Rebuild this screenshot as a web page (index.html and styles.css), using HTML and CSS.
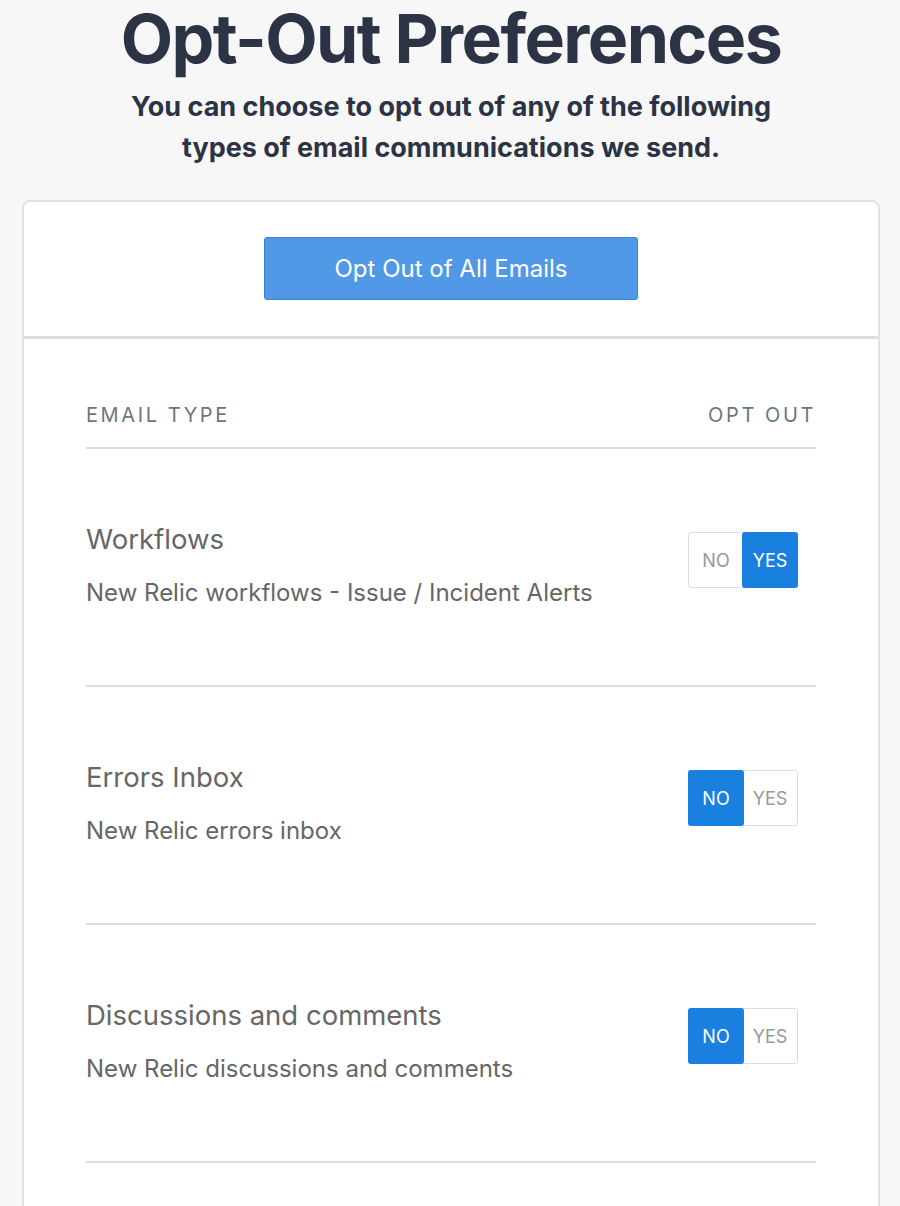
FILE: index.html
```html
<!DOCTYPE html>
<html lang="en">
<head>
    <meta charset="UTF-8">
    <meta name="viewport" content="width=device-width, initial-scale=1.0">
    <title>Opt-Out Preferences</title>
    <link rel="stylesheet" href="styles.css">
</head>
<body>

    <h1 class="page-title">Opt-Out Preferences</h1>
    <p class="page-intro">You can choose to opt out of any of the following<br>types of email communications we send.</p>

    <div class="card">
        <div class="card-top">
            <button class="opt-all-btn">Opt Out of All Emails</button>
        </div>

        <div class="card-body">
            <div class="table-head">
                <span>Email Type</span>
                <span>Opt Out</span>
            </div>

            <!-- Workflows -->
            <div class="row">
                <div class="row-text">
                    <div class="row-title">Workflows</div>
                    <div class="row-desc">New Relic workflows - Issue / Incident Alerts</div>
                </div>
                <div class="toggle">
                    <span class="toggle-opt">NO</span>
                    <span class="toggle-opt active">YES</span>
                </div>
            </div>

            <!-- Errors Inbox -->
            <div class="row">
                <div class="row-text">
                    <div class="row-title">Errors Inbox</div>
                    <div class="row-desc">New Relic errors inbox</div>
                </div>
                <div class="toggle">
                    <span class="toggle-opt active">NO</span>
                    <span class="toggle-opt">YES</span>
                </div>
            </div>

            <!-- Discussions -->
            <div class="row">
                <div class="row-text">
                    <div class="row-title">Discussions and comments</div>
                    <div class="row-desc">New Relic discussions and comments</div>
                </div>
                <div class="toggle">
                    <span class="toggle-opt active">NO</span>
                    <span class="toggle-opt">YES</span>
                </div>
            </div>
        </div>
    </div>

</body>
</html>
```

FILE: styles.css
```css
body {
    font-family: Inter, 'Noto Sans', sans-serif;
    background-color: #f7f7f7;
    color: #2b3345;
    margin: 0;
    padding: 0 20px 0 22px;
}
.page-title {
    font-size: 68px;
    font-weight: 700;
    line-height: 72px;
    text-align: center;
    margin: 0;
    padding-top: 2px;
    letter-spacing: -1.6px;
}
.page-intro {
    font-size: 27px;
    font-weight: 700;
    line-height: 41px;
    text-align: center;
    margin: 12px 0 32px;
}
.card {
    background-color: #ffffff;
    border: 2px solid #e2e2e2;
    border-radius: 8px;
}
.card-top {
    display: flex;
    justify-content: center;
    padding: 35px 0 36px;
    border-bottom: 3px solid #dddddd;
}
.opt-all-btn {
    font-family: Inter, 'Noto Sans', sans-serif;
    width: 374px;
    height: 63px;
    background-color: #5199e6;
    border: 1px solid #3a84d6;
    border-radius: 3px;
    color: #ffffff;
    font-size: 24px;
    cursor: pointer;
}
.card-body {
    padding: 0 62px 80px;
}
.table-head {
    display: flex;
    justify-content: space-between;
    padding: 62px 0 18px;
    border-bottom: 2px solid #dddddd;
    font-size: 20px;
    line-height: 28px;
    letter-spacing: 2.6px;
    text-transform: uppercase;
    color: #6c7680;
}
.row {
    display: flex;
    justify-content: space-between;
    align-items: flex-start;
    padding: 72px 0 76px;
    border-bottom: 2px solid #dddddd;
}
.row-title {
    font-size: 27.5px;
    line-height: 36px;
    color: #666666;
}
.row-desc {
    font-size: 24px;
    line-height: 32px;
    color: #666666;
    margin-top: 20px;
}
.toggle {
    display: flex;
    margin: 11px 18px 0 0;
    border: 1px solid #dddddd;
    border-radius: 3px;
}
.toggle-opt {
    width: 54px;
    height: 54px;
    display: flex;
    align-items: center;
    justify-content: center;
    font-size: 18px;
    color: #999999;
}
.toggle-opt.active {
    background-color: #1a80e0;
    color: #ffffff;
    border-radius: 3px;
    margin: -1px;
    width: 56px;
    height: 56px;
}
```
